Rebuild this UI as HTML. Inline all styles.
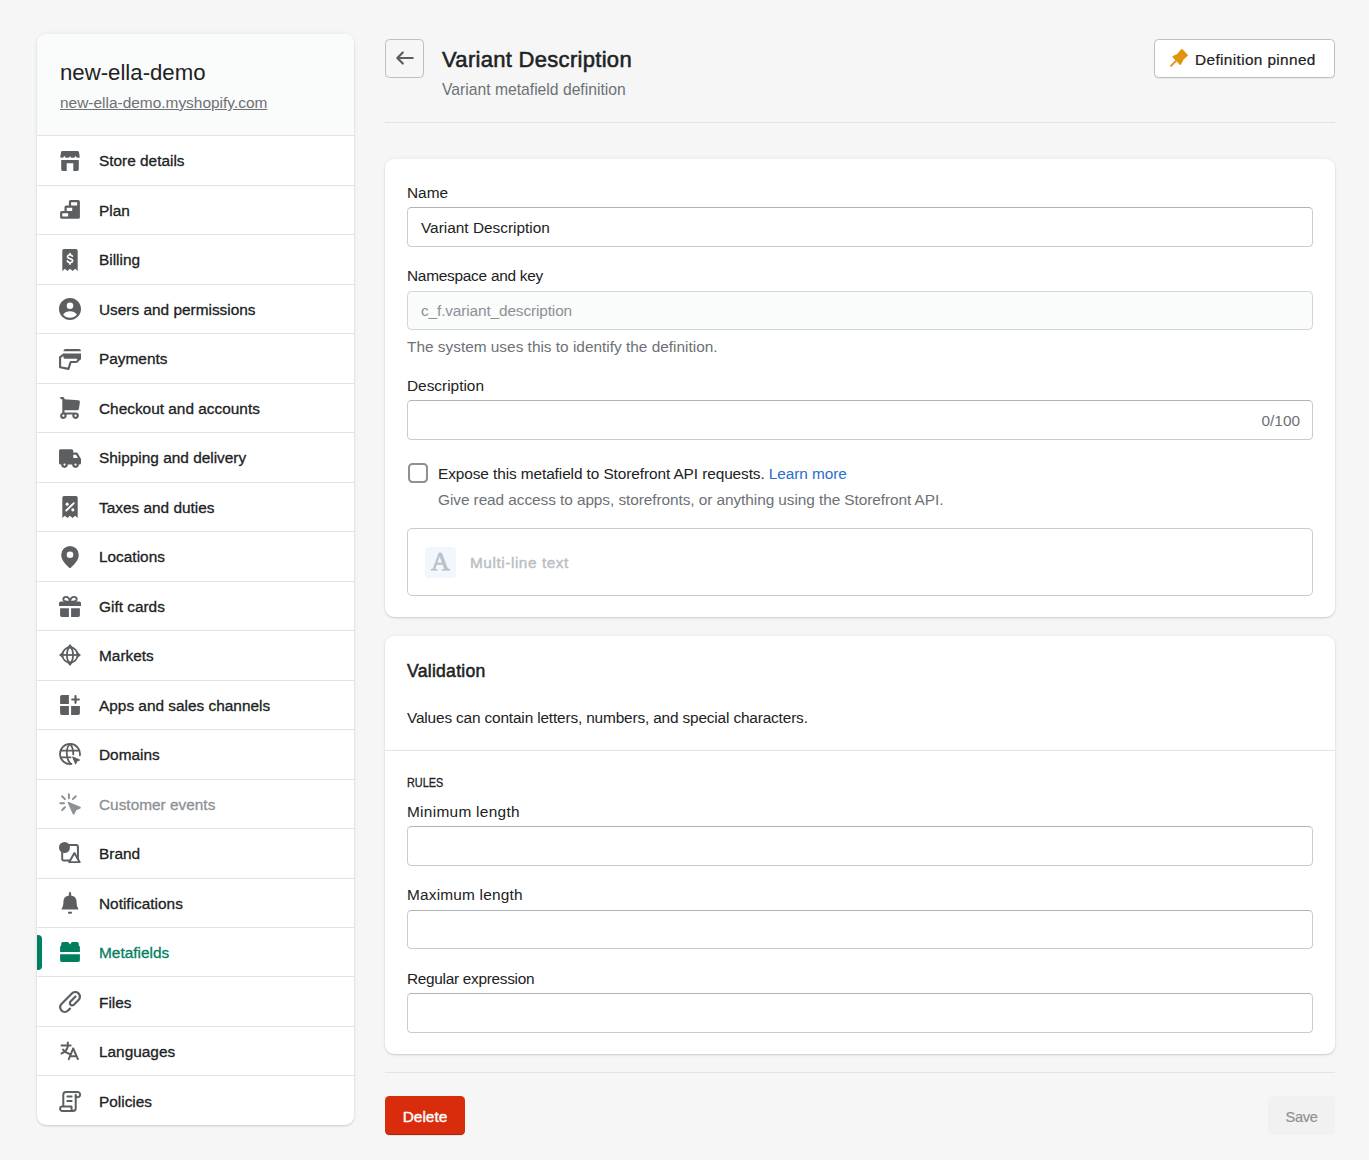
<!DOCTYPE html>
<html lang="en">
<head>
<meta charset="utf-8">
<title>Variant Description</title>
<style>
*{box-sizing:border-box;margin:0;padding:0}
html,body{width:1369px;height:1160px;overflow:hidden}
body{background:#f6f6f7;font-family:"Liberation Sans",sans-serif;font-size:15.4px;color:#202223;position:relative;-webkit-font-smoothing:antialiased}
a{color:inherit}
.abs{position:absolute}
/* sidebar */
.side{position:absolute;left:37px;top:34px;width:317px;height:1091px;background:#fff;border-radius:9px;box-shadow:0 0 5px rgba(23,24,24,.05),0 1px 2px rgba(0,0,0,.15);overflow:hidden}
.side .hd{height:101px;background:#fafbfb;position:relative}
.side .hd .nm{position:absolute;left:23px;top:24px;font-size:22.2px;line-height:30px;color:#202223;white-space:nowrap}
.side .hd .url{position:absolute;left:23px;top:59px;font-size:15.45px;line-height:20px;color:#6d7175;text-decoration:underline;white-space:nowrap}
.nav{list-style:none}
.nav li{height:49.5px;border-top:1px solid #e1e3e5;position:relative}
.nav li svg{position:absolute;left:22px;top:13.7px;width:22px;height:22px;fill:currentColor;color:#5c5f62;overflow:visible}
.nav li span{position:absolute;left:62px;top:15.4px;font-size:15.4px;line-height:20px;font-weight:400;-webkit-text-stroke:.3px currentColor;color:#202223;white-space:nowrap}
.nav li:nth-child(17),.nav li:nth-child(19){height:49px}
.nav li:nth-child(18),.nav li:nth-child(20){height:50px}
.nav li:nth-child(18) span,.nav li:nth-child(20) span{top:15.9px}
.nav li.dis span{color:#8c9196}
.nav li.dis svg{color:#8c9196}
.nav li.act span{color:#007f5f}
.nav li.act svg{color:#007f5f}
.nav li.act:before{content:"";position:absolute;left:0;top:6.5px;width:4.8px;height:35px;background:#008060;border-radius:0 4px 4px 0}
/* header */
.back{position:absolute;left:385px;top:39px;width:39px;height:39px;border:1px solid #babfc3;border-radius:4.4px}
.back svg{position:absolute;left:8px;top:7.4px;width:22px;height:22px;fill:#5c5f62}
h1{position:absolute;left:442px;top:44.7px;font-size:22px;line-height:30px;font-weight:400;-webkit-text-stroke:.55px currentColor;letter-spacing:.3px;color:#202223;white-space:nowrap}
.sub{position:absolute;left:442px;top:80.3px;font-size:15.7px;line-height:20px;color:#6d7175;white-space:nowrap}
.pin{position:absolute;left:1154px;top:39px;width:181px;height:39px;background:#fff;border:1px solid #babfc3;border-radius:4.4px;box-shadow:0 1px 0 rgba(0,0,0,.05)}
.pin svg{position:absolute;left:13px;top:7.1px;width:22px;height:22px;fill:currentColor;color:#e0950f}
.pin span{position:absolute;left:40px;top:10px;font-size:15.4px;line-height:20px;white-space:nowrap;letter-spacing:.36px;-webkit-text-stroke:.22px currentColor}
.hr{position:absolute;left:385px;width:950px;height:1px;background:#e1e3e5}
/* cards */
.card{position:absolute;left:385px;width:950px;background:#fff;border-radius:9px;box-shadow:0 0 5px rgba(23,24,24,.05),0 1px 2px rgba(0,0,0,.15)}
.lbl{position:absolute;left:22px;font-size:15.4px;line-height:20px;white-space:nowrap;color:#202223}
.inp{position:absolute;left:22px;width:906px;height:39.6px;border:1px solid #c9cccf;border-top-color:#aeb4b9;border-radius:4.4px;background:#fff}
.inp span{position:absolute;left:13px;top:9.5px;font-size:15.4px;line-height:20px;white-space:nowrap}
.inp.dis{background:#fafbfb;border-color:#d2d5d8}
.inp.dis span{color:#8c9196}
.help{position:absolute;left:22px;font-size:15.4px;line-height:20px;color:#6d7175;white-space:nowrap}
.cb{position:absolute;left:23px;top:304px;width:20px;height:20px;border:2.2px solid #8c9196;border-radius:4.4px;background:#fff}
.lnk{color:#2c6ecb}
.type{position:absolute;left:22px;top:369px;width:906px;height:67.5px;border:1px solid #c9cccf;border-radius:5px}
.type .ta{position:absolute;left:17px;top:18px;width:31px;height:31px;background:#f2f7fe;border-radius:3.6px;font-family:"Liberation Serif",serif;font-weight:400;font-size:26px;line-height:30.5px;text-align:center;color:#bbbfc9;-webkit-text-stroke:.75px currentColor}
.type .tt{position:absolute;left:62px;top:23.5px;font-size:15.4px;line-height:20px;font-weight:400;letter-spacing:.55px;-webkit-text-stroke:.4px currentColor;color:#babec3;white-space:nowrap}
h2{position:absolute;left:22px;top:23.2px;font-size:17.6px;line-height:24px;font-weight:400;letter-spacing:.26px;-webkit-text-stroke:.5px currentColor;color:#202223;white-space:nowrap}
.rules{position:absolute;left:22px;top:139px;font-size:13.2px;line-height:16px;font-weight:400;-webkit-text-stroke:.3px currentColor;color:#202223;transform:scaleX(.825);transform-origin:0 0;white-space:nowrap}
.del{position:absolute;left:385px;top:1096px;width:80px;height:39px;background:#d82c0d;border-radius:4.4px;color:#fff;font-weight:400;-webkit-text-stroke:.4px currentColor;font-size:15.4px;line-height:41px;text-align:center;box-shadow:0 1px 0 rgba(0,0,0,.08),inset 0 -1px 0 rgba(0,0,0,.2)}
.save{position:absolute;left:1268px;top:1096px;width:67px;height:39px;background:#f1f1f1;border-radius:4.4px;color:#8c9196;font-size:14.6px;letter-spacing:-.35px;-webkit-text-stroke:.2px currentColor;line-height:42.6px;text-align:center}
</style>
</head>
<body>

<div class="side">
  <div class="hd">
    <div class="nm">new-ella-demo</div>
    <a class="url">new-ella-demo.myshopify.com</a>
  </div>
  <ul class="nav">
    <li><svg viewBox="0 0 20 20" style="top:14px"><path d="M1.791 2.253l-.597 3.583A1 1 0 0 0 2.18 7h.893a1.5 1.5 0 0 0 1.342-.83l.447-.894.447.894A1.5 1.5 0 0 0 6.651 7h1.698a1.5 1.5 0 0 0 1.342-.83L10 5.552l.309.618A1.5 1.5 0 0 0 11.651 7h1.698a1.5 1.5 0 0 0 1.342-.83l.447-.894.447.894a1.5 1.5 0 0 0 1.342.83h.893a1 1 0 0 0 .986-1.164l-.597-3.583A1.5 1.5 0 0 0 16.729 1H3.271a1.5 1.5 0 0 0-1.48 1.253z"/><path d="M18 9H2v8.5A1.5 1.5 0 0 0 3.500 19H7v-7h6v7h3.500a1.500 1.500 0 0 0 1.500-1.500V9z"/></svg><span>Store details</span></li>
    <li><svg viewBox="0 0 20 20" style="top:13.5px"><path fill-rule="evenodd" d="M10.500 1A1.500 1.500 0 0 0 9 2.500V6H6.500A1.500 1.500 0 0 0 5 7.500V11H2.500A1.500 1.500 0 0 0 1 12.500v4A1.500 1.500 0 0 0 2.500 18h15a1.500 1.500 0 0 0 1.500-1.500v-14A1.500 1.500 0 0 0 17.500 1h-7zM11 3h5.500v3H11V3zM7 8h5v3H7V8zm-4 5h5.300v3H3v-3z"/></svg><span>Plan</span></li>
    <li><svg viewBox="0 0 20 20" style="top:14px"><path fill-rule="evenodd" d="M3 1.500A1.500 1.500 0 0 1 4.500 0h11A1.500 1.500 0 0 1 17 1.500V20l-2.330-2-2.340 2L10 18l-2.330 2-2.340-2L3 20V1.500z"/><path fill="#fff" d="M10.800 4.200a.8.8 0 0 0-1.600 0v.560C7.900 5 7 5.900 7 7.100c0 1.500 1.200 2.100 2.600 2.500l.9.250c.8.230 1 .5 1 .85 0 .5-.5.900-1.400.900-.8 0-1.400-.3-1.700-.9a.8.800 0 1 0-1.400.7c.450.900 1.250 1.450 2.200 1.640v.560a.8.800 0 0 0 1.600 0v-.560c1.400-.260 2.300-1.200 2.300-2.400 0-1.500-1.100-2.100-2.500-2.500l-.9-.260C8.900 7.650 8.600 7.400 8.600 7c0-.450.500-.8 1.300-.8.700 0 1.200.250 1.500.7a.8.800 0 1 0 1.350-.850A3 3 0 0 0 10.800 4.760V4.200z"/></svg><span>Billing</span></li>
    <li><svg viewBox="0 0 20 20" style="top:13.5px"><path fill-rule="evenodd" d="M10 0c5.514 0 10 4.486 10 10s-4.486 10-10 10S0 15.514 0 10 4.486 0 10 0zm6.240 15a7.990 7.990 0 0 0-12.480 0 7.990 7.990 0 0 0 12.480 0zM10 10a3 3 0 1 0 0-6 3 3 0 0 0 0 6z"/></svg><span>Users and permissions</span></li>
    <li><svg viewBox="0 0 20 20" style="top:14px"><path d="M4 3a2 2 0 0 1 2-2h12a2 2 0 0 1 2 2H4z"/><path d="M4 5h16v5.200l-2.600 2c.6-1.300-.1-2.500-1.500-2.500H5.200A1.200 1.200 0 0 1 4 8.500V5z"/><path fill="none" stroke="currentColor" stroke-width="1.900" stroke-linejoin="round" stroke-linecap="round" d="M4.200 6L1 8.200v9.300l7.600 1.500 2-6.300H15c1.300 0 2.200-.8 2.400-1.900"/></svg><span>Payments</span></li>
    <li><svg viewBox="0 0 20 20" style="top:13.5px"><path fill-rule="evenodd" d="M1 1c0-.552.450-1 1.004-1h1.505c.831 0 1.505.672 1.505 1.500v.560l12.574.908c.877.055 1.520.843 1.397 1.710l-.866 6.034A1.504 1.504 0 0 1 16.630 12H5.014v2h10.043a3.005 3.005 0 0 1 3.011 3c0 1.657-1.348 3-3.010 3a3.005 3.005 0 0 1-2.840-4H6.850a3.005 3.005 0 0 1-2.840 4A3.005 3.005 0 0 1 1 17a3.001 3.001 0 0 1 2.006-2.830V2H2.004A1.002 1.002 0 0 1 1 1zm4.014 16c0-.552-.450-1-1.004-1s-1.003.448-1.003 1 .449 1 1.003 1c.554 0 1.004-.448 1.004-1zm10.043 1c.554 0 1.004-.448 1.004-1s-.450-1-1.004-1-1.003.448-1.003 1 .449 1 1.003 1z"/></svg><span>Checkout and accounts</span></li>
    <li><svg viewBox="0 0 20 20" style="top:13.5px"><path fill-rule="evenodd" d="M1.500 2A1.500 1.500 0 0 0 0 3.500v11A1.500 1.500 0 0 0 1.500 16H2a3 3 0 1 0 6 0h4a3 3 0 1 0 6 0h.500a1.500 1.500 0 0 0 1.500-1.500v-3.361a1.500 1.500 0 0 0-.214-.772l-2.783-4.639A1.500 1.500 0 0 0 15.717 5H13V3.500A1.500 1.500 0 0 0 11.500 2h-10zM15 17a1 1 0 1 0 0-2 1 1 0 0 0 0 2zM4 16a1 1 0 1 1 2 0 1 1 0 0 1-2 0zm13.234-6H13V7h2.434l1.800 3z"/></svg><span>Shipping and delivery</span></li>
    <li><svg viewBox="0 0 20 20" style="top:13.5px"><path d="M3 1.500A1.500 1.500 0 0 1 4.500 0h11A1.500 1.500 0 0 1 17 1.500V20l-2.330-2-2.340 2L10 18l-2.330 2-2.340-2L3 20V1.500z"/><circle cx="7.400" cy="7.400" r="1.400" fill="#fff"/><circle cx="12.600" cy="12.600" r="1.400" fill="#fff"/><path stroke="#fff" stroke-width="1.700" stroke-linecap="round" d="M6.600 13.200l6.800-6.600"/></svg><span>Taxes and duties</span></li>
    <li><svg viewBox="0 0 20 20" style="top:14px"><path fill-rule="evenodd" d="M10 20c-.3 0-.55-.1-.75-.3C6.500 17.300 2 13 2 8a8 8 0 0 1 16 0c0 5-4.500 9.300-7.250 11.700-.2.200-.45.300-.75.300zM10 5a3 3 0 1 0 0 6 3 3 0 0 0 0-6z"/></svg><span>Locations</span></li>
    <li><svg viewBox="0 0 20 20" style="top:13.5px"><path d="M0 7.500A1.500 1.500 0 0 1 1.500 6h17A1.500 1.500 0 0 1 20 7.500V10H0V7.500zM1 12h8v8H2.500A1.500 1.500 0 0 1 1 18.500V12zm10 0h8v6.500a1.500 1.500 0 0 1-1.500 1.500H11v-8z"/><path fill="none" stroke="currentColor" stroke-width="1.800" d="M10 6.300C9.600 3.200 8.200 1.700 6.400 1.700c-1.700 0-2.700 1.200-2.400 2.600.4 1.600 3 2 6 2zm0 0c.4-3.100 1.800-4.600 3.600-4.600 1.700 0 2.700 1.200 2.400 2.600-.4 1.600-3 2-6 2z"/></svg><span>Gift cards</span></li>
    <li><svg viewBox="0 0 20 20" style="top:13px"><g fill="none" stroke="currentColor" stroke-width="1.600"><circle cx="10" cy="10" r="6.900"/><ellipse cx="10" cy="10" rx="2.800" ry="6.900"/><path d="M2 10h16"/></g><path d="M10 0l3 3.700H7L10 0zm0 20l-3-3.700h6L10 20zM0 10l3.700-3v6L0 10zm20 0l-3.700 3V7L20 10z"/></svg><span>Markets</span></li>
    <li><svg viewBox="0 0 20 20" style="top:13.5px"><path d="M2.500 1A1.500 1.500 0 0 0 1 2.500V9h8V1H2.500zm15 18a1.500 1.500 0 0 0 1.500-1.500V11h-8v8h6.500zM1 17.500V11h8v8H2.500A1.500 1.500 0 0 1 1 17.500zM16 2a1 1 0 1 0-2 0v2h-2a1 1 0 1 0 0 2h2v2a1 1 0 1 0 2 0V6h2a1 1 0 1 0 0-2h-2V2z"/></svg><span>Apps and sales channels</span></li>
    <li><svg viewBox="0 0 20 20" style="top:13px"><g fill="none" stroke="currentColor" stroke-width="1.600" stroke-linecap="round"><path d="M19 11.300A9.100 9.100 0 1 0 11.300 19"/><path d="M1.600 7h16.800M1.600 13h9"/><path d="M10 1C6 4 6 15 10.800 19M10 1c2 2 3 5.500 3 9.400"/></g><path d="M12.600 12.300l6.300 2.600c.4.200.4.700 0 .9l-2.300 1-1 2.300c-.2.400-.7.400-.9 0l-2.700-6.200c-.2-.4.200-.8.600-.6z"/></svg><span>Domains</span></li>
    <li class="dis"><svg viewBox="0 0 20 20" style="top:13px"><g fill="none" stroke="currentColor" stroke-width="1.800" stroke-linecap="round"><path d="M9 1.200v3.600M1.200 9.300h3.300M2.800 3l2.600 2.600M15.200 3l-2.600 2.600M5.400 13l-2.600 2.600"/></g><path d="M8.900 8.200l10.500 4.400c.6.300.6 1.100 0 1.400l-3.700 1.700-1.700 3.700c-.3.600-1.100.6-1.400 0L8 9.100c-.3-.6.300-1.200.9-.9z"/></svg><span>Customer events</span></li>
    <li><svg viewBox="0 0 20 20" style="top:13px"><rect x="2.900" y="2.700" width="14.300" height="14.200" rx="1.500" fill="none" stroke="currentColor" stroke-width="1.800"/><path fill="#fff" stroke="currentColor" stroke-width="1.800" stroke-linejoin="round" d="M14 10l4.800 8.300H9.300L14 10z"/><circle cx="5" cy="5" r="5"/></svg><span>Brand</span></li>
    <li><svg viewBox="0 0 20 20" style="top:13.5px"><path d="M10 0a1 1 0 0 1 1 1v2.032l-.001.021-.002.030A6.002 6.002 0 0 1 16 9c0 3.093.625 4.312 1.599 6.210l.034.068c.170.330-.070.722-.442.722H2.809a.496.496 0 0 1-.442-.722l.034-.068C3.375 13.312 4 12.093 4 9a6.002 6.002 0 0 1 5.003-5.918l-.002-.040A.835.835 0 0 1 9 3V1a1 1 0 0 1 1-1zm2 18a2 2 0 0 1-4 0h4z"/></svg><span>Notifications</span></li>
    <li class="act"><svg viewBox="0 0 20 20" style="top:13px"><path d="M1 10V5.600c0-.4.160-.78.440-1.060L2 4V2.500A1.500 1.500 0 0 1 3.500 1h4.300c.53 0 1.020.28 1.290.74L10 3.200l.91-1.460c.27-.46.760-.74 1.290-.74h4.300A1.500 1.500 0 0 1 18 2.500V4l.56.540c.28.280.44.660.44 1.060V10H1zm0 2h18v5.500a1.500 1.500 0 0 1-1.500 1.500h-15A1.500 1.500 0 0 1 1 17.500V12z"/></svg><span>Metafields</span></li>
    <li><svg viewBox="0 0 20 20" style="top:14px"><path d="M5.243 20a5.228 5.228 0 0 1-3.707-1.533A5.213 5.213 0 0 1 0 14.759c0-1.402.546-2.719 1.536-3.708l9.515-9.519a5.250 5.250 0 0 1 8.553 1.700A5.210 5.210 0 0 1 20 5.240a5.208 5.208 0 0 1-1.535 3.708l-4.258 4.260a3.124 3.124 0 0 1-5.092-1.012A3.098 3.098 0 0 1 8.879 11c0-.835.324-1.619.914-2.208l4.500-4.501a1 1 0 1 1 1.414 1.414l-4.500 4.501a1.112 1.112 0 0 0-.328.794A1.114 1.114 0 0 0 12 12.120c.297 0 .582-.118.793-.327l4.258-4.260A3.223 3.223 0 0 0 18 5.240c0-.866-.337-1.681-.949-2.293a3.248 3.248 0 0 0-4.586 0L2.950 12.465A3.224 3.224 0 0 0 2 14.760c0 .866.338 1.680.950 2.293a3.248 3.248 0 0 0 4.586 0l1.757-1.758a1 1 0 1 1 1.414 1.414L8.950 18.467A5.228 5.228 0 0 1 5.243 20z"/></svg><span>Files</span></li>
    <li><svg viewBox="0 0 20 20" style="top:13px"><g fill="none" stroke="currentColor" stroke-width="1.800" stroke-linecap="round" stroke-linejoin="round"><path d="M2.300 4.900h8.300M8 2.300v2.600M8.200 5c-.6 3.300-2.600 6-5.900 7.300M3.600 8.600c1.300 1.900 3.300 3.300 5.900 4.100"/><path d="M8.900 17.400L12.900 7.600l4.300 9.800M10.400 14.700h5.400"/></g></svg><span>Languages</span></li>
    <li><svg viewBox="0 0 20 20" style="top:14px"><g fill="none" stroke="currentColor" stroke-width="1.800" stroke-linecap="round" stroke-linejoin="round"><path d="M3.900 14.500V4.400a2.500 2.500 0 0 1 2.500-2.500H17a2.300 2.300 0 1 1-1.800 3.800"/><path d="M15.200 4.200v12.300a2.500 2.500 0 0 1-2.500 2.500H3a2 2 0 0 1 0-4h8.400v2.200a1.800 1.800 0 0 0 1.800 1.800"/><path d="M7.600 6h3.900M7.600 10h3.900"/></g></svg><span>Policies</span></li>
  </ul>
</div>

<div class="back"><svg viewBox="0 0 20 20"><path d="M17 9H5.414l3.293-3.293a.999.999 0 1 0-1.414-1.414l-5 5a.999.999 0 0 0 0 1.414l5 5a.997.997 0 0 0 1.414 0 .999.999 0 0 0 0-1.414L5.414 11H17a1 1 0 1 0 0-2z"/></svg></div>
<h1>Variant Description</h1>
<div class="sub">Variant metafield definition</div>
<div class="pin"><svg viewBox="0 0 20 20"><path stroke="currentColor" stroke-width="1.5" stroke-linejoin="round" d="M12.6 2.6l4.800 4.900-3.900 3.600-2.300 4.400L4.700 8.900l4-1.800 3.900-4.500z"/><path stroke="currentColor" stroke-width="1.700" stroke-linecap="round" d="M7 12.800l-4.200 4.400"/></svg><span>Definition pinned</span></div>
<div class="hr" style="top:122px"></div>

<div class="card" style="top:159px;height:458px">
  <div class="lbl" style="top:23.5px">Name</div>
  <div class="inp" style="top:48px;height:40px"><span>Variant Description</span></div>
  <div class="lbl" style="top:107.2px;letter-spacing:-.25px">Namespace and key</div>
  <div class="inp dis" style="top:132px;height:39px"><span style="letter-spacing:-.13px;top:9px">c_f.variant_description</span></div>
  <div class="help" style="top:178.2px">The system uses this to identify the definition.</div>
  <div class="lbl" style="top:216.5px">Description</div>
  <div class="inp" style="top:241px;height:40px"><span style="left:auto;right:12px;color:#6d7175">0/100</span></div>
  <div class="cb"></div>
  <div class="lbl" style="left:53px;top:304.5px;letter-spacing:-.09px">Expose this metafield to Storefront API requests. <a class="lnk">Learn more</a></div>
  <div class="help" style="left:53px;top:330.5px;letter-spacing:-.07px">Give read access to apps, storefronts, or anything using the Storefront API.</div>
  <div class="type">
    <div class="ta">A</div>
    <div class="tt">Multi-line text</div>
  </div>
</div>

<div class="card" style="top:636px;height:418px">
  <h2>Validation</h2>
  <div class="lbl" style="top:71.5px;letter-spacing:-.16px">Values can contain letters, numbers, and special characters.</div>
  <div class="abs" style="left:0;top:114px;width:950px;height:1px;background:#e1e3e5"></div>
  <div class="rules">RULES</div>
  <div class="lbl" style="top:165.5px;letter-spacing:.3px">Minimum length</div>
  <div class="inp" style="top:190px;height:40px"></div>
  <div class="lbl" style="top:249px;letter-spacing:.2px">Maximum length</div>
  <div class="inp" style="top:274px;height:39px"></div>
  <div class="lbl" style="top:332.5px;letter-spacing:-.3px">Regular expression</div>
  <div class="inp" style="top:357px;height:40px"></div>
</div>

<div class="hr" style="top:1072px"></div>
<div class="del">Delete</div>
<div class="save">Save</div>

</body>
</html>
